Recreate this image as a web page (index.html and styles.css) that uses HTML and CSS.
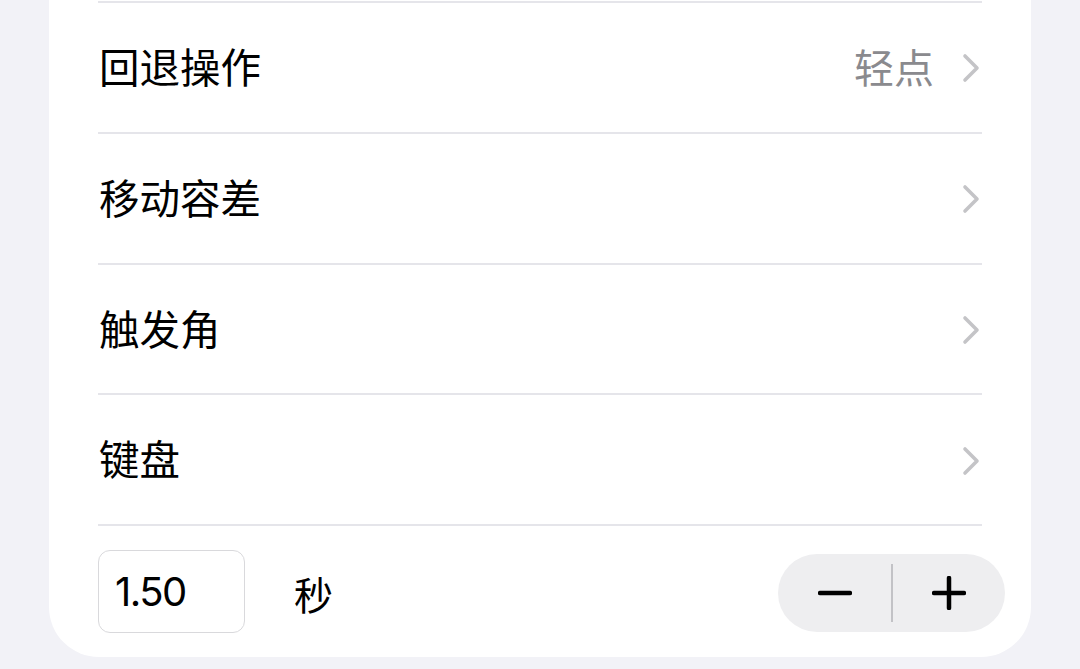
FILE: index.html
```html
<!DOCTYPE html>
<html lang="zh">
<head>
<meta charset="utf-8">
<link rel="stylesheet" href="styles.css">
</head>
<body>
<div class="card">
  <div class="list">
    <div class="sep"></div>
    <div class="row">
      <span class="label">回退操作</span>
      <span class="right"><span class="value">轻点</span><svg class="chev" viewBox="0 0 18 30"><polyline points="3,3 15,15 3,27"/></svg></span>
    </div>
    <div class="sep"></div>
    <div class="row">
      <span class="label">移动容差</span>
      <span class="right"><svg class="chev" viewBox="0 0 18 30"><polyline points="3,3 15,15 3,27"/></svg></span>
    </div>
    <div class="sep"></div>
    <div class="row">
      <span class="label">触发角</span>
      <span class="right"><svg class="chev" viewBox="0 0 18 30"><polyline points="3,3 15,15 3,27"/></svg></span>
    </div>
    <div class="sep"></div>
    <div class="row">
      <span class="label">键盘</span>
      <span class="right"><svg class="chev" viewBox="0 0 18 30"><polyline points="3,3 15,15 3,27"/></svg></span>
    </div>
    <div class="sep"></div>
  </div>
  <div class="timer">
    <div class="field">1.50</div>
    <span class="unit">秒</span>
    <div class="stepper">
      <span class="step"><svg viewBox="0 0 34 34"><line x1="2" y1="17" x2="32" y2="17"/></svg></span>
      <span class="divider"></span>
      <span class="step"><svg viewBox="0 0 34 34"><line x1="2" y1="17" x2="32" y2="17"/><line x1="17" y1="2" x2="17" y2="32"/></svg></span>
    </div>
  </div>
</div>
</body>
</html>
```
FILE: styles.css
```css
html, body {
  margin: 0;
  padding: 0;
  background: #f2f2f7;
  font-family: "Noto Sans CJK SC", "Noto Sans", sans-serif;
}
body {
  width: 1080px;
  height: 669px;
  overflow: hidden;
}
.card {
  margin-left: 49px;
  width: 982px;
  height: 657px;
  background: #ffffff;
  border-radius: 0 0 50px 50px;
  box-sizing: border-box;
  padding: 1px 49px 0 49px;
}
.sep {
  height: 2px;
  background: #e5e5ea;
}
.row {
  height: 128.75px;
  display: flex;
  align-items: center;
  justify-content: space-between;
}
.label {
  font-size: 40.5px;
  color: #000;
  line-height: 1;
  padding-left: 1px;
  margin-top: -2px;
}
.right {
  display: flex;
  align-items: center;
  gap: 28px;
  padding-right: 2px;
}
.value {
  font-size: 40px;
  color: #8a8a8e;
  line-height: 1;
  margin-top: -2px;
}
.chev {
  width: 18px;
  height: 30px;
  margin-top: 2px;
}
.chev polyline {
  fill: none;
  stroke: #c4c4c7;
  stroke-width: 3.6;
  stroke-linecap: round;
  stroke-linejoin: round;
}
.timer {
  display: flex;
  align-items: center;
  margin-top: 24px;
  margin-right: -23px;
}
.field {
  width: 147px;
  height: 83px;
  box-sizing: border-box;
  border: 1px solid #d9d9dc;
  border-radius: 12px;
  font-family: "Inter", "Liberation Sans", sans-serif;
  font-size: 40px;
  color: #000;
  display: flex;
  align-items: center;
  padding-left: 16px;
  letter-spacing: -1.5px;
}
.unit {
  font-size: 39px;
  margin-left: 49px;
  padding-top: 2px;
}
.stepper {
  margin-left: auto;
  width: 227px;
  height: 78px;
  background: #eeeef0;
  border-radius: 39px;
  display: flex;
  align-items: center;
  justify-content: center;
  margin-top: 2px;
}
.step {
  width: 112px;
  display: flex;
  justify-content: center;
}
.step svg {
  width: 34px;
  height: 34px;
}
.step line {
  stroke: #000;
  stroke-width: 4.5;
  stroke-linecap: round;
}
.divider {
  width: 2px;
  height: 58px;
  background: #c2c2c6;
}
```
